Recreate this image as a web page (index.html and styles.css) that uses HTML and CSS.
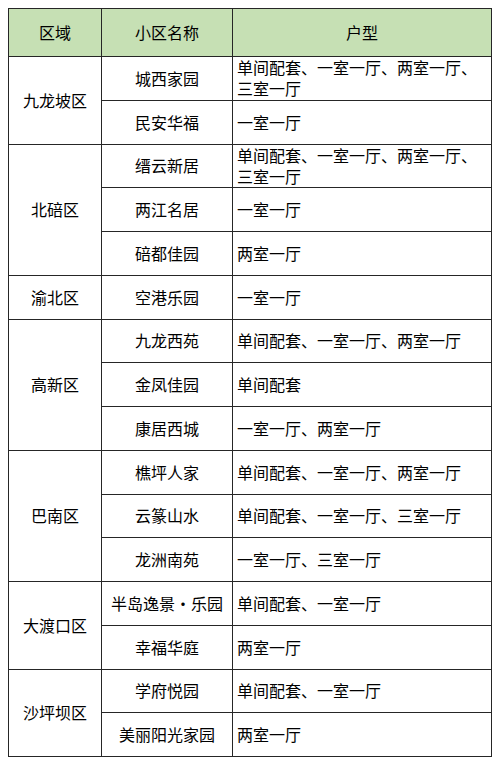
FILE: index.html
```html
<!DOCTYPE html>
<html lang="zh">
<head>
<meta charset="utf-8">
<link rel="stylesheet" href="styles.css">
</head>
<body>
<table class="grid">
  <colgroup>
    <col class="c1"><col class="c2"><col class="c3">
  </colgroup>
  <thead>
    <tr class="head"><th>区域</th><th>小区名称</th><th>户型</th></tr>
  </thead>
  <tbody>
    <tr><td class="region" rowspan="2">九龙坡区</td><td class="name">城西家园</td><td class="type">单间配套、一室一厅、两室一厅、三室一厅</td></tr>
    <tr><td class="name">民安华福</td><td class="type">一室一厅</td></tr>
    <tr><td class="region" rowspan="3">北碚区</td><td class="name">缙云新居</td><td class="type">单间配套、一室一厅、两室一厅、三室一厅</td></tr>
    <tr><td class="name">两江名居</td><td class="type">一室一厅</td></tr>
    <tr><td class="name">碚都佳园</td><td class="type">两室一厅</td></tr>
    <tr><td class="region">渝北区</td><td class="name">空港乐园</td><td class="type">一室一厅</td></tr>
    <tr><td class="region" rowspan="3">高新区</td><td class="name">九龙西苑</td><td class="type">单间配套、一室一厅、两室一厅</td></tr>
    <tr><td class="name">金凤佳园</td><td class="type">单间配套</td></tr>
    <tr><td class="name">康居西城</td><td class="type">一室一厅、两室一厅</td></tr>
    <tr><td class="region" rowspan="3">巴南区</td><td class="name">樵坪人家</td><td class="type">单间配套、一室一厅、两室一厅</td></tr>
    <tr><td class="name">云篆山水</td><td class="type">单间配套、一室一厅、三室一厅</td></tr>
    <tr><td class="name">龙洲南苑</td><td class="type">一室一厅、三室一厅</td></tr>
    <tr><td class="region" rowspan="2">大渡口区</td><td class="name">半岛逸景<span class="dot">·</span>乐园</td><td class="type">单间配套、一室一厅</td></tr>
    <tr><td class="name">幸福华庭</td><td class="type">两室一厅</td></tr>
    <tr><td class="region" rowspan="2">沙坪坝区</td><td class="name">学府悦园</td><td class="type">单间配套、一室一厅</td></tr>
    <tr><td class="name">美丽阳光家园</td><td class="type">两室一厅</td></tr>
  </tbody>
</table>
</body>
</html>
```
FILE: styles.css
```css
html, body {
  margin: 0;
  background: #ffffff;
}
body {
  padding: 8px;
  font-family: "Noto Sans CJK SC", "Noto Sans", sans-serif;
  font-size: 16px;
  color: #000000;
}
.grid {
  border-collapse: collapse;
  table-layout: fixed;
  width: 483px;
}
.c1 { width: 93px; }
.c2 { width: 131px; }
.c3 { width: 259px; }
.grid th, .grid td {
  border: 1px solid #262626;
  padding: 0;
  vertical-align: middle;
  line-height: 21px;
  font-weight: normal;
}
.head th {
  background: #c6e0b4;
  height: 47px;
  text-align: center;
}
.grid tbody tr {
  height: 43.75px;
}
.region, .name {
  text-align: center;
}
.name {
  white-space: nowrap;
}
.dot {
  display: inline-block;
  width: 16px;
  text-align: center;
}
.type {
  text-align: left;
  padding-left: 4px !important;
  padding-right: 2px !important;
}
```
